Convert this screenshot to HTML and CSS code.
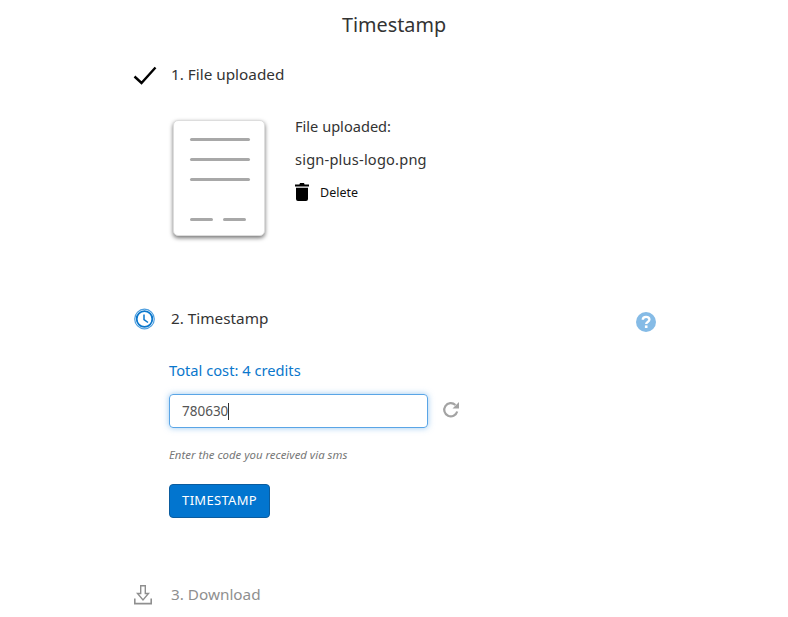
FILE: index.html
```html
<!DOCTYPE html>
<html lang="en">
<head>
    <meta charset="UTF-8">
    <title>Timestamp</title>
    <link rel="stylesheet" href="styles.css">
</head>
<body>
    <h1 class="page-title">Timestamp</h1>

    <div class="steps">
        <!-- step 1 -->
        <div class="step-head">
            <svg class="step-icon" width="24" height="24" viewBox="0 0 24 24"><path d="M1.5 13.5 L8.5 20 L22.5 4.5" fill="none" stroke="#000" stroke-width="2.4"/></svg>
            <span class="step-title">1. File uploaded</span>
        </div>
        <div class="file-row">
            <div class="file-card">
                <div class="file-line"></div>
                <div class="file-line"></div>
                <div class="file-line"></div>
                <div class="file-dashes">
                    <div class="file-dash"></div>
                    <div class="file-dash"></div>
                </div>
            </div>
            <div class="file-info">
                <div class="file-label">File uploaded:</div>
                <div class="file-name">sign-plus-logo.png</div>
                <div class="delete-row">
                    <svg width="14" height="18" viewBox="0 0 14 18"><path d="M5 0 H9 L9.6 1.5 H14 V3.5 H0 V1.5 H4.4 Z M1 4.8 H13 V16 Q13 18 11 18 H3 Q1 18 1 16 Z" fill="#000"/></svg>
                    <span class="delete-text">Delete</span>
                </div>
            </div>
        </div>

        <!-- step 2 -->
        <div class="step-head step-two">
            <svg class="step-icon" width="24" height="24" viewBox="0 0 24 24"><circle cx="11.5" cy="12" r="7.8" fill="none" stroke="#0a77cc" stroke-width="1.8"/><circle cx="11.5" cy="12" r="9.8" fill="none" stroke="#4f9fdf" stroke-width="1.2"/><path d="M11 7.5 V12.5 L15 15.5" fill="none" stroke="#0a77cc" stroke-width="1.5"/></svg>
            <span class="step-title">2. Timestamp</span>
            <svg class="help-icon" width="20" height="20" viewBox="0 0 20 20"><circle cx="10" cy="10" r="10" fill="#85bbe6"/><path d="M6.8 7.8 C6.8 3.9 13.4 3.9 13.4 7.6 C13.4 10 10.2 10 10.2 12" fill="none" stroke="#fff" stroke-width="2.4"/><rect x="8.9" y="13.4" width="2.6" height="2.6" fill="#fff"/></svg>
        </div>
        <div class="stamp-form">
            <div class="total-cost">Total cost: 4 credits</div>
            <div class="code-row">
                <div class="code-input">780630<span class="caret"></span></div>
                <svg class="refresh-icon" width="18" height="18" viewBox="0 0 18 18"><path d="M15.2 10.5 A6.6 6.6 0 1 1 13.4 4" fill="none" stroke="#a3a3a3" stroke-width="2.2"/><path d="M17 1 V7.5 H10.5 Z" fill="#a3a3a3"/></svg>
            </div>
            <div class="code-hint">Enter the code you received via sms</div>
            <button class="stamp-btn">TIMESTAMP</button>
        </div>

        <!-- step 3 -->
        <div class="step-head step-three">
            <svg class="step-icon" width="24" height="24" viewBox="0 0 24 24"><path d="M7.7 2.7 H12.3 V10.5 H15.5 L10 17 L4.5 10.5 H7.7 Z" fill="none" stroke="#8f8f8f" stroke-width="1.4"/><path d="M1.8 15.5 V20.6 H18.2 V15.5" fill="none" stroke="#8f8f8f" stroke-width="1.6"/></svg>
            <span class="step-title muted">3. Download</span>
        </div>
    </div>
</body>
</html>
```
FILE: styles.css
```css
body {
    font-family: "Noto Sans", Arial, sans-serif;
    background-color: #fff;
    color: #333;
    margin: 0;
    padding: 0;
    height: 617px;
    overflow: hidden;
}

.page-title {
    margin: 0;
    padding-top: 11px;
    font-size: 19.8px;
    line-height: 28px;
    font-weight: 400;
    text-align: center;
}

.steps {
    padding-left: 133px;
    width: 523px;
}

.step-head {
    display: flex;
    align-items: center;
    height: 24px;
    margin-top: 24px;
}

.step-icon {
    flex: none;
    margin-right: 14px;
}

.step-title {
    font-size: 15.3px;
    margin-bottom: 2px;
}

.muted {
    color: #8f8f8f;
}

.file-row {
    display: flex;
    margin-top: 33px;
    margin-left: 40px;
}

.file-card {
    width: 92px;
    height: 116px;
    padding: 17px 14px 0 16px;
    box-sizing: border-box;
    background-color: #fff;
    border: 1px solid #ddd;
    border-radius: 5px;
    box-shadow: 0 2px 4px rgba(0, 0, 0, 0.55);
}

.file-line {
    height: 3px;
    border-radius: 2px;
    background-color: #a8a8a8;
    margin-bottom: 17px;
}

.file-dashes {
    display: flex;
    gap: 10px;
    margin-top: 37px;
}

.file-dash {
    width: 23px;
    height: 3px;
    border-radius: 2px;
    background-color: #a8a8a8;
}

.file-info {
    margin-left: 30px;
    font-size: 14.6px;
}

.file-label {
    line-height: 20px;
    margin-top: -4px;
}

.file-name {
    line-height: 20px;
    margin-top: 13px;
    letter-spacing: 0.2px;
}

.delete-row {
    display: flex;
    align-items: center;
    margin-top: 14px;
}

.delete-text {
    margin-left: 11px;
    font-size: 12.5px;
    color: #111;
}

.step-two {
    margin-top: 71px;
}

.help-icon {
    margin-left: auto;
    margin-top: 6px;
}

.stamp-form {
    margin-left: 36px;
    margin-top: 29px;
}

.total-cost {
    font-size: 14.7px;
    line-height: 20px;
    color: #0a77cc;
}

.code-row {
    display: flex;
    align-items: center;
    margin-top: 14px;
}

.code-input {
    width: 259px;
    height: 34px;
    box-sizing: border-box;
    padding: 0 12px;
    display: flex;
    align-items: center;
    font-size: 13.5px;
    color: #555;
    border: 1px solid #5aa5e6;
    border-radius: 4px;
    box-shadow: 0 0 6px rgba(90, 165, 230, 0.6);
}

.caret {
    display: inline-block;
    width: 1px;
    height: 17px;
    background-color: #333;
}

.refresh-icon {
    margin-left: 14px;
    margin-top: -3px;
}

.code-hint {
    margin-top: 19px;
    font-size: 11.4px;
    line-height: 16px;
    font-style: italic;
    color: #777;
}

.stamp-btn {
    display: block;
    margin-top: 21px;
    width: 101px;
    height: 34px;
    padding: 0 0 2px;
    font-family: inherit;
    font-size: 13px;
    letter-spacing: 0.3px;
    color: #fff;
    background-color: #0275cf;
    border: 1px solid #0b5c9e;
    border-radius: 4px;
}

.step-three {
    margin-top: 65px;
}
```
